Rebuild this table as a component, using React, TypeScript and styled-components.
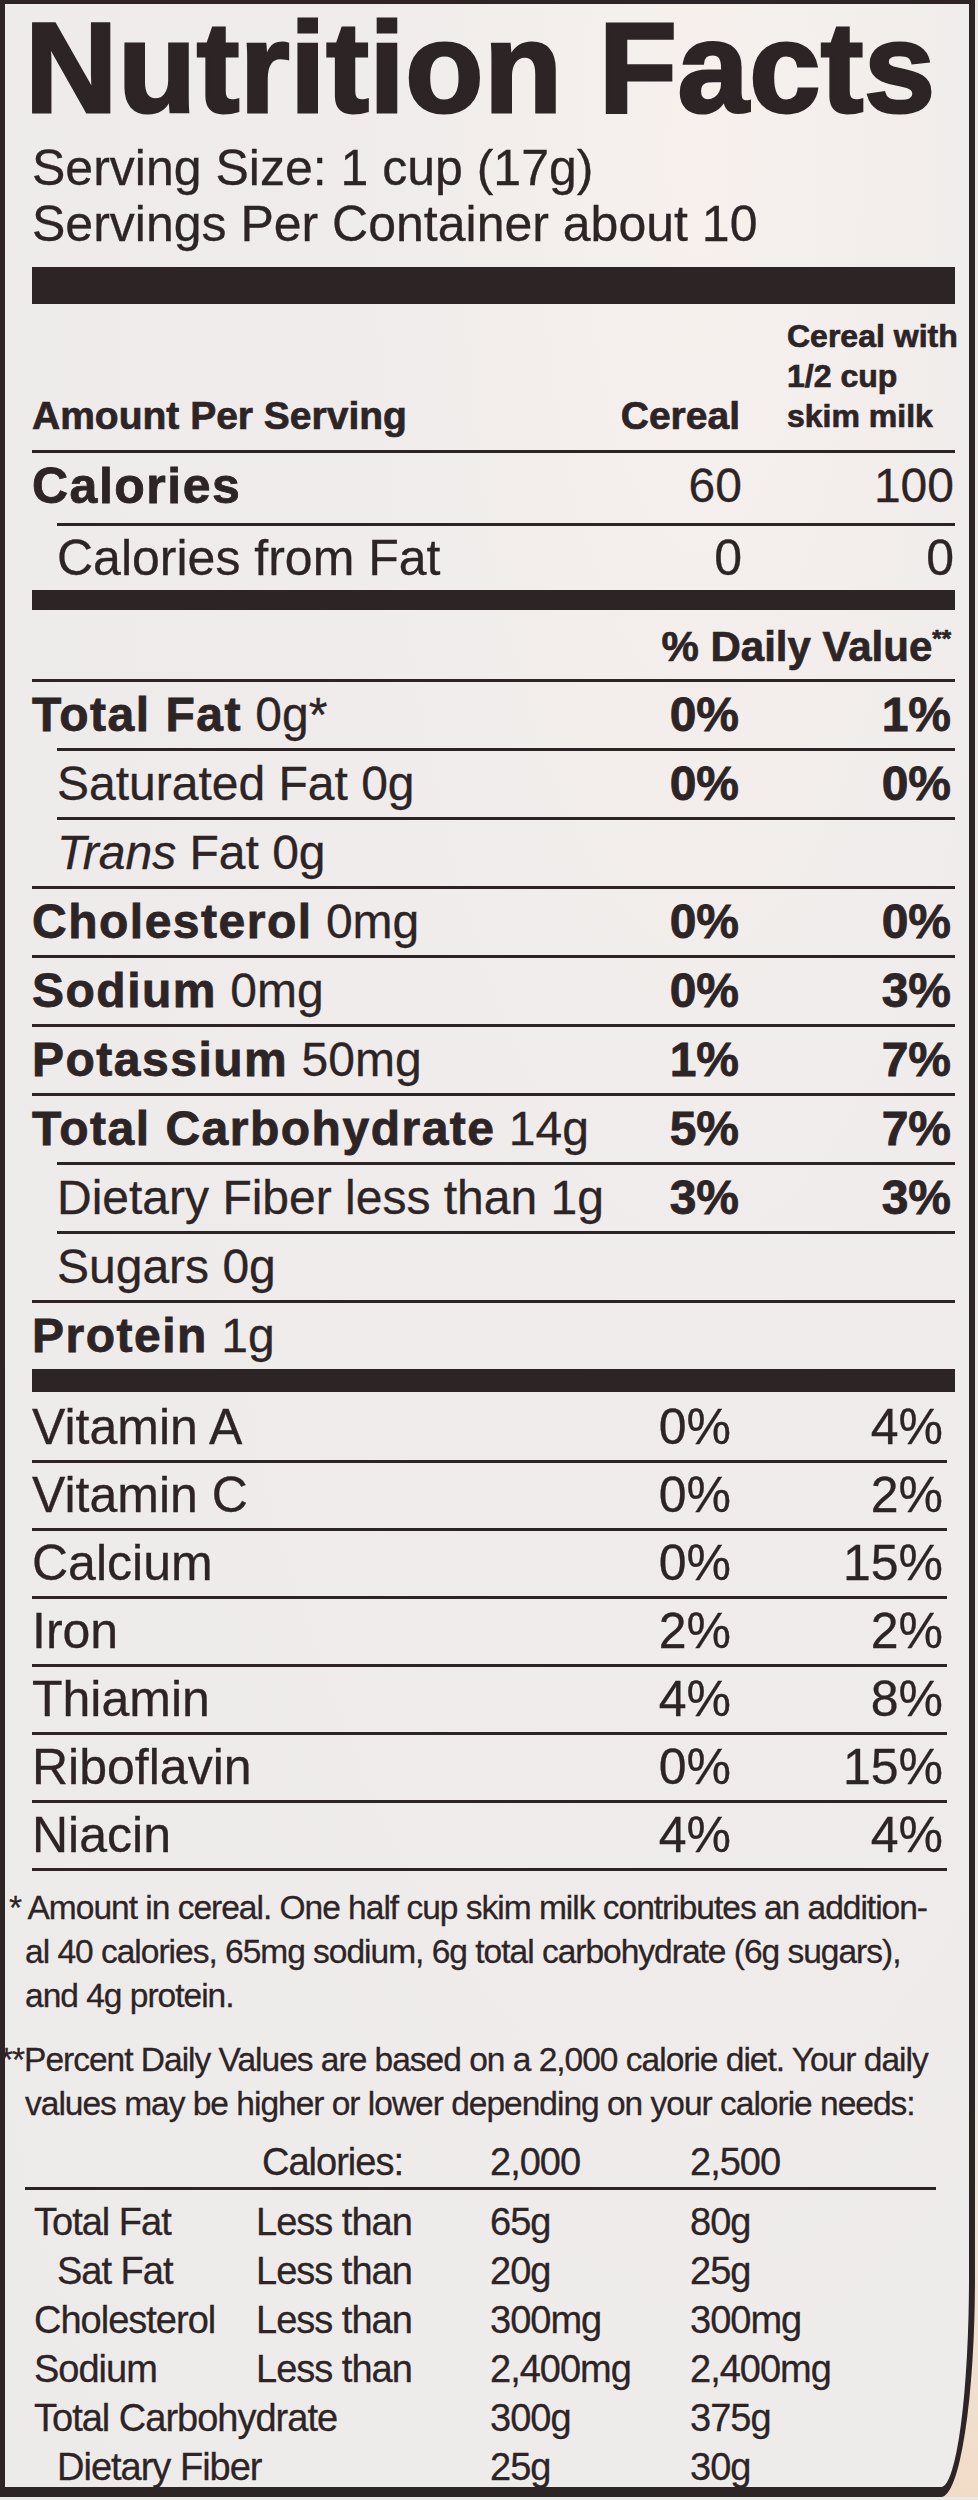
import React from "react";
import styled, { createGlobalStyle } from "styled-components";

const INK = "#2d2426";

const GlobalStyle = createGlobalStyle`
  html, body {
    margin: 0;
    padding: 0;
  }
  body {
    background: linear-gradient(to bottom, #ebe9e7 0%, #ebe9e7 80%, #f1dcc7 100%);
    font-family: "Liberation Sans", Arial, Helvetica, sans-serif;
    color: ${INK};
    -webkit-text-stroke: 0.3px ${INK};
  }
`;

const Label = styled.div`
  box-sizing: border-box;
  width: 975px;
  height: 2497px;
  border-style: solid;
  border-color: ${INK};
  border-width: 4px 6px 10px 5px;
  border-bottom-right-radius: 34px 220px;
  padding: 0 14px 0 27px;
  background: radial-gradient(ellipse at 72% 6%, #f7f0ed 0%, #efeceb 35%, #edebea 100%);
`;

const Title = styled.h1`
  margin: 0 0 0 -7px;
  font-size: 128px;
  line-height: 128px;
  font-weight: 700;
  letter-spacing: 0.5px;
  white-space: nowrap;
  -webkit-text-stroke: 3px ${INK};
`;

const Serving = styled.div`
  margin-top: 8px;
`;

const ServingLine = styled.div`
  font-size: 50px;
  line-height: 56px;
  white-space: nowrap;
`;

const Bar = styled.div<{ $h: number; $mt?: number }>`
  height: ${(p) => p.$h}px;
  margin-top: ${(p) => p.$mt ?? 0}px;
  background: ${INK};
`;

const Header = styled.div`
  display: grid;
  grid-template-columns: 1fr 120px 212px;
  align-items: end;
  height: 146px;
  box-sizing: border-box;
  padding: 0 0 14px 0;
  margin-right: 3px;
  font-weight: 700;
  -webkit-text-stroke: 0.7px ${INK};
`;

const HeadLeft = styled.div`
  font-size: 39px;
  line-height: 40px;
  white-space: nowrap;
`;

const HeadCereal = styled.div`
  font-size: 39px;
  line-height: 40px;
  text-align: right;
`;

const HeadMilk = styled.div`
  font-size: 32px;
  line-height: 40px;
  padding-left: 47px;
  white-space: nowrap;
`;

const Row = styled.div<{
  $indent?: boolean;
  $border?: boolean;
  $lh?: number;
  $pt?: number;
  $pb?: number;
  $pr?: number;
  $size?: number;
}>`
  display: grid;
  grid-template-columns: 1fr 120px 212px;
  margin-left: ${(p) => (p.$indent ? 25 : 0)}px;
  border-top: ${(p) => (p.$border === false ? "none" : `3px solid ${INK}`)};
  padding: ${(p) => p.$pt ?? 2}px ${(p) => p.$pr ?? 4}px ${(p) => p.$pb ?? 2}px 0;
  line-height: ${(p) => p.$lh ?? 62}px;
  font-size: ${(p) => p.$size ?? 48}px;
  white-space: nowrap;
`;

const Name = styled.div<{ $size?: number }>`
  ${(p) => (p.$size ? `font-size: ${p.$size}px;` : "")}
`;

const Bold = styled.span`
  font-weight: 700;
  letter-spacing: 1.5px;
  -webkit-text-stroke: 0.8px ${INK};
`;

const Ital = styled.span`
  font-style: italic;
`;

const Val = styled.div<{ $bold?: boolean }>`
  text-align: right;
  font-weight: ${(p) => (p.$bold ? 700 : 400)};
  -webkit-text-stroke: ${(p) => (p.$bold ? `0.8px ${INK}` : `0.3px ${INK}`)};
`;

const DailyValue = styled.div`
  padding-top: 5px;
  padding-right: 4px;
  line-height: 64px;
  font-size: 42px;
  font-weight: 700;
  text-align: right;
  -webkit-text-stroke: 0.7px ${INK};
`;

const Sup = styled.span`
  font-size: 24px;
  vertical-align: 14px;
  line-height: 0;
`;

const Vitamins = styled.div`
  margin-right: 8px;
  border-bottom: 3px solid ${INK};
`;

const Foot = styled.p<{ $indent: number; $mt: number }>`
  margin: ${(p) => p.$mt}px 0 0 ${(p) => -7 - p.$indent}px;
  padding-left: ${(p) => p.$indent}px;
  text-indent: -${(p) => p.$indent}px;
  font-size: 33.5px;
  letter-spacing: -1px;
  line-height: 44px;
  white-space: nowrap;
`;

const DvTable = styled.div`
  margin-top: 12px;
  font-size: 38px;
  letter-spacing: -1px;
`;

const DvRow = styled.div`
  display: grid;
  grid-template-columns: 224px 234px 200px 1fr;
  line-height: 49px;
  white-space: nowrap;
`;

const DvRule = styled.div`
  height: 3px;
  width: 911px;
  margin: 0 0 8px -7px;
  background: ${INK};
`;

const DvCell = styled.div<{ $indent?: boolean; $shift?: number }>`
  padding-left: ${(p) => (p.$indent ? 25 : p.$shift ?? 0)}px;
  overflow: visible;
`;

type Nutrient = {
  b?: string;
  i?: string;
  r?: string;
  c?: string;
  m?: string;
  indent?: boolean;
};

const nutrients: Nutrient[] = [
  { b: "Total Fat", r: " 0g*", c: "0%", m: "1%" },
  { r: "Saturated Fat 0g", c: "0%", m: "0%", indent: true },
  { i: "Trans", r: " Fat 0g", indent: true },
  { b: "Cholesterol", r: " 0mg", c: "0%", m: "0%" },
  { b: "Sodium", r: " 0mg", c: "0%", m: "3%" },
  { b: "Potassium", r: " 50mg", c: "1%", m: "7%" },
  { b: "Total Carbohydrate", r: " 14g", c: "5%", m: "7%" },
  { r: "Dietary Fiber less than 1g", c: "3%", m: "3%", indent: true },
  { r: "Sugars 0g", indent: true },
  { b: "Protein", r: " 1g" },
];

const vitamins: [string, string, string][] = [
  ["Vitamin A", "0%", "4%"],
  ["Vitamin C", "0%", "2%"],
  ["Calcium", "0%", "15%"],
  ["Iron", "2%", "2%"],
  ["Thiamin", "4%", "8%"],
  ["Riboflavin", "0%", "15%"],
  ["Niacin", "4%", "4%"],
];

const dv: { n: string; l: string; a: string; b: string; indent?: boolean }[] = [
  { n: "Total Fat", l: "Less than", a: "65g", b: "80g" },
  { n: "Sat Fat", l: "Less than", a: "20g", b: "25g", indent: true },
  { n: "Cholesterol", l: "Less than", a: "300mg", b: "300mg" },
  { n: "Sodium", l: "Less than", a: "2,400mg", b: "2,400mg" },
  { n: "Total Carbohydrate", l: "", a: "300g", b: "375g" },
  { n: "Dietary Fiber", l: "", a: "25g", b: "30g", indent: true },
];

export default function App() {
  return (
    <>
      <GlobalStyle />
      <Label>
        <Title>Nutrition Facts</Title>
        <Serving>
          <ServingLine>Serving Size: 1 cup (17g)</ServingLine>
          <ServingLine>Servings Per Container about 10</ServingLine>
        </Serving>
        <Bar $h={37} $mt={15} />

        <Header>
          <HeadLeft>Amount Per Serving</HeadLeft>
          <HeadCereal>Cereal</HeadCereal>
          <HeadMilk>
            Cereal with
            <br />
            1/2 cup
            <br />
            skim milk
          </HeadMilk>
        </Header>

        <Row $lh={66} $pt={0} $pb={4} $pr={1}>
          <Name $size={50}>
            <Bold>Calories</Bold>
          </Name>
          <Val>60</Val>
          <Val>100</Val>
        </Row>
        <Row $indent $lh={64} $pt={0} $pb={0} $pr={1} $size={50}>
          <Name>Calories from Fat</Name>
          <Val>0</Val>
          <Val>0</Val>
        </Row>

        <Bar $h={20} />
        <DailyValue>
          % Daily Value<Sup>**</Sup>
        </DailyValue>

        {nutrients.map((n, idx) => (
          <Row key={idx} $indent={n.indent}>
            <Name>
              {n.b && <Bold>{n.b}</Bold>}
              {n.i && <Ital>{n.i}</Ital>}
              {n.r}
            </Name>
            <Val $bold>{n.c ?? ""}</Val>
            <Val $bold>{n.m ?? ""}</Val>
          </Row>
        ))}

        <Bar $h={23} />

        <Vitamins>
          {vitamins.map(([name, c, m], idx) => (
            <Row
              key={name}
              $border={idx !== 0}
              $pt={idx === 0 ? 5 : 2}
              $lh={61}
              $pb={2}
              $size={50}
            >
              <Name>{name}</Name>
              <Val>{c}</Val>
              <Val>{m}</Val>
            </Row>
          ))}
        </Vitamins>

        <Foot $indent={16} $mt={15}>
          * Amount in cereal. One half cup skim milk contributes an addition-
          <br />
          al 40 calories, 65mg sodium, 6g total carbohydrate (6g sugars),
          <br />
          and 4g protein.
        </Foot>
        <Foot $indent={25} $mt={20}>
          **Percent Daily Values are based on a 2,000 calorie diet. Your daily
          <br />
          values may be higher or lower depending on your calorie needs:
        </Foot>

        <DvTable>
          <DvRow>
            <DvCell />
            <DvCell $shift={6}>Calories:</DvCell>
            <DvCell>2,000</DvCell>
            <DvCell>2,500</DvCell>
          </DvRow>
          <DvRule />
          {dv.map((r) => (
            <DvRow key={r.n}>
              <DvCell $indent={r.indent} $shift={2}>
                {r.n}
              </DvCell>
              <DvCell>{r.l}</DvCell>
              <DvCell>{r.a}</DvCell>
              <DvCell>{r.b}</DvCell>
            </DvRow>
          ))}
        </DvTable>
      </Label>
    </>
  );
}
